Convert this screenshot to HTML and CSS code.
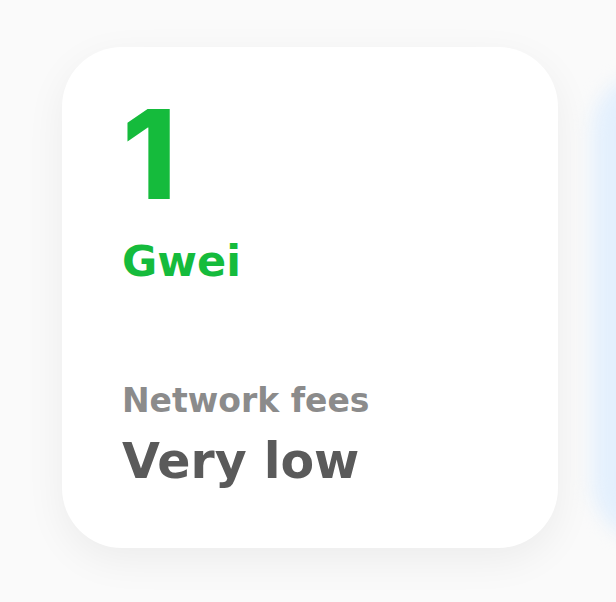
FILE: index.html
```html
<!DOCTYPE html>
<html>
<head>
<meta charset="utf-8">
<link rel="stylesheet" href="styles.css">
</head>
<body>
<div class="stage">
  <div class="card">
    <div class="value">1</div>
    <div class="unit">Gwei</div>
    <div class="label">Network fees</div>
    <div class="status">Very low</div>
  </div>
  <div class="card next"></div>
</div>
</body>
</html>
```

FILE: styles.css
```css
html, body {
  margin: 0;
  padding: 0;
}
body {
  width: 616px;
  height: 602px;
  overflow: hidden;
  background: #fafafa;
  font-family: "DejaVu Sans", Inter, sans-serif;
}
.stage {
  box-sizing: border-box;
  width: 616px;
  height: 602px;
  overflow: hidden;
  display: flex;
  gap: 34px;
  padding: 47px 0 0 62px;
}
.card {
  flex: 0 0 auto;
  box-sizing: border-box;
  width: 496px;
  height: 501px;
  background: #fff;
  border-radius: 60px;
  box-shadow: 0 12px 40px rgba(0, 0, 0, 0.06);
  padding: 45px 0 0 60px;
  display: flex;
  flex-direction: column;
}
.card.next {
  background: linear-gradient(to right, #e4f0fd, #d8e9fb);
  box-shadow: none;
  filter: blur(9px);
  margin-top: 25px;
  height: 470px;
}
.value {
  font-family: Inter, "Noto Sans", sans-serif;
  color: #15bb3c;
  font-size: 124px;
  font-weight: 800;
  line-height: 124px;
}
.unit {
  color: #15bb3c;
  font-size: 43px;
  font-weight: 700;
  line-height: 50px;
  margin-top: 20px;
}
.label {
  color: #8b8b8b;
  font-size: 33px;
  font-weight: 700;
  line-height: 40px;
  margin-top: 95px;
}
.status {
  color: #5a5a5a;
  font-size: 49px;
  font-weight: 700;
  line-height: 56px;
  margin-top: 13px;
}
```
